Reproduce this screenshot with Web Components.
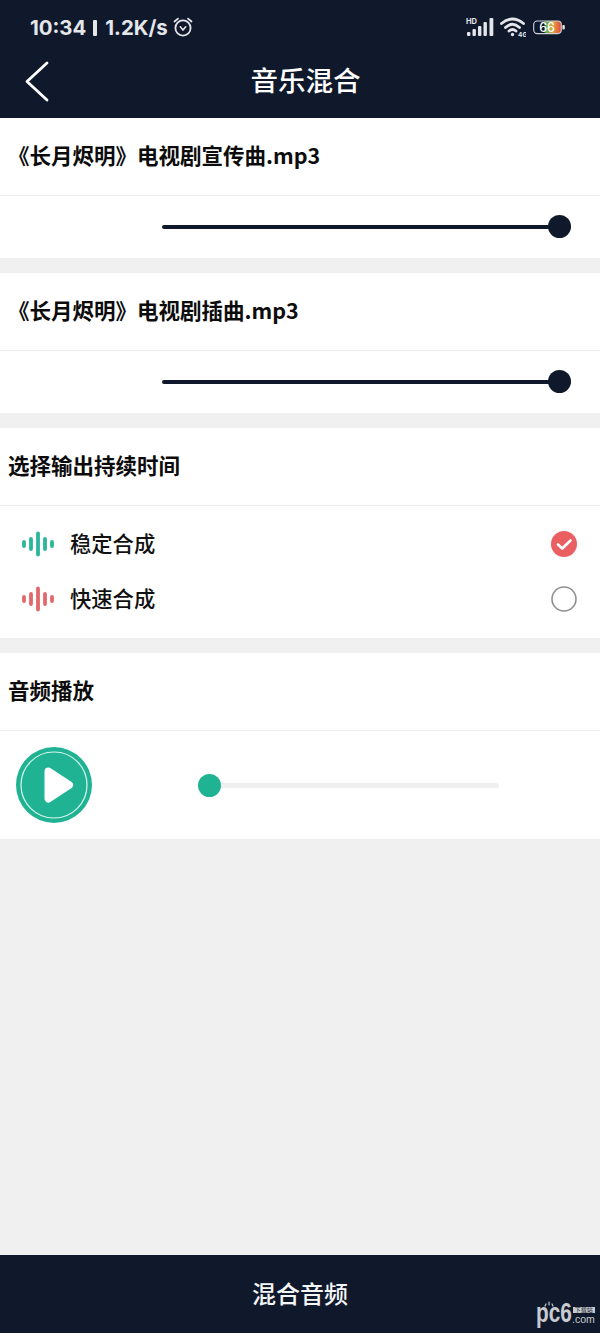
<!DOCTYPE html>
<html lang="zh">
<head>
<meta charset="utf-8">
<title>音乐混合</title>
<style>
  html, body { margin: 0; padding: 0; }
  body {
    width: 600px; height: 1333px; background: #f0f0f0; overflow: hidden;
    display: flex; flex-direction: column; position: relative;
    font-family: "Noto Sans CJK SC", "Noto Sans", sans-serif; color: #0c0c0c;
  }
  .grow { flex: 1; }
</style>
</head>
<body>
<top-bar>音乐混合</top-bar>
<mix-section label="《长月烬明》电视剧宣传曲.mp3"><volume-slider></volume-slider></mix-section>
<mix-section label="《长月烬明》电视剧插曲.mp3"><volume-slider></volume-slider></mix-section>
<mix-section label="选择输出持续时间">
  <mode-list>
    <mode-row color="#2bb59b" checked>稳定合成</mode-row>
    <mode-row color="#e2696b">快速合成</mode-row>
  </mode-list>
</mix-section>
<mix-section label="音频播放" last><audio-player></audio-player></mix-section>
<div class="grow"></div>
<mix-button>混合音频</mix-button>
<site-mark></site-mark>

<script>
class TopBar extends HTMLElement {
  constructor() {
    super();
    this.attachShadow({ mode: 'open' }).innerHTML = `
      <style>
        :host { display: block; height: 118px; background: #10192c; color: #fff; }
        .status { height: 52px; display: flex; align-items: center; justify-content: space-between; padding: 2px 35px 0 30px; box-sizing: border-box; color: #e4e6ea; }
        .left { display: flex; align-items: center; font: 700 20.4px Inter, sans-serif; }
        .pipe { width: 4px; height: 16px; background: currentColor; margin: 1px 8px 0 7px; border-radius: 1px; }
        .alarm { margin-left: 4px; }
        .right { display: flex; align-items: center; }
        .wifi { margin: 0 7px 0 6px; }
        .bar { height: 66px; display: flex; align-items: center; justify-content: center; position: relative; font-size: 27.5px; font-weight: 500; line-height: 1; padding: 0 0 10px 11px; box-sizing: border-box; }
        .back { position: absolute; left: 24px; top: 9px; }
      </style>
      <div class="status">
        <div class="left">
          <span>10:34</span><i class="pipe"></i><span>1.2K/s</span>
          <svg class="alarm" width="22" height="22" viewBox="0 0 22 22" fill="none" stroke="currentColor" stroke-width="1.8" stroke-linecap="round">
            <circle cx="11" cy="12" r="7.6"/>
            <path d="M2.5 5.5 L6 2.6 M19.5 5.5 L16 2.6"/>
            <path d="M8.3 10.8 L11 14 L13.7 10.8" stroke-width="1.6"/>
          </svg>
        </div>
        <div class="right">
          <svg width="28" height="20" viewBox="0 0 28 20" fill="currentColor">
            <text x="0" y="6.5" font-family="Inter, sans-serif" font-size="7.5" font-weight="700">HD</text>
            <rect x="1" y="15" width="3.4" height="4" rx="1"/>
            <rect x="6.5" y="12" width="3.4" height="7" rx="1"/>
            <rect x="12" y="9" width="3.4" height="10" rx="1"/>
            <rect x="17.5" y="5" width="3.4" height="14" rx="1"/>
            <rect x="23.5" y="1" width="3.8" height="18" rx="1"/>
          </svg>
          <svg class="wifi" width="26" height="20" viewBox="0 0 26 20" fill="none" stroke="currentColor" stroke-width="2.8" stroke-linecap="round">
            <path d="M1.5 6.5 Q12.5 -2.5 23.5 6.5"/>
            <path d="M5.5 10.5 Q12.5 4 19.5 10.5"/>
            <path d="M9 14 Q12.5 11 16 14"/>
            <circle cx="12.5" cy="17.5" r="1.7" fill="currentColor" stroke="none"/>
            <text x="18" y="19.5" font-family="Inter, sans-serif" font-size="6.5" font-weight="700" fill="currentColor" stroke="none">4G</text>
          </svg>
          <svg width="32" height="15" viewBox="0 0 32 15">
            <defs>
              <linearGradient id="batt" x1="0" x2="1" y1="0" y2="0">
                <stop offset="0.36" stop-color="#10192c"/>
                <stop offset="0.44" stop-color="#4fae5a"/>
                <stop offset="0.68" stop-color="#e3a93c"/>
                <stop offset="1" stop-color="#e2473f"/>
              </linearGradient>
            </defs>
            <rect x="0.7" y="1" width="27.6" height="12.6" rx="3.5" fill="url(#batt)" stroke="#cfd2d8" stroke-width="1.1"/>
            <rect x="29.4" y="5" width="2.4" height="4.6" rx="1" fill="#e6e8ec"/>
            <text x="14" y="12" text-anchor="middle" font-family="Inter, sans-serif" font-size="12.5" font-weight="500" fill="#fff">66</text>
          </svg>
        </div>
      </div>
      <div class="bar">
        <svg class="back" width="26" height="42" viewBox="0 0 26 42" fill="none" stroke="#fff" stroke-width="2.8" stroke-linecap="round" stroke-linejoin="round">
          <path d="M23 2 L3 20.5 L23 39"/>
        </svg>
        <slot></slot>
      </div>`;
  }
}

class MixSection extends HTMLElement {
  constructor() {
    super();
    this.attachShadow({ mode: 'open' }).innerHTML = `
      <style>
        :host { display: block; background: #fff; margin-bottom: 15px; }
        :host([last]) { margin-bottom: 0; }
        .head { height: 78px; box-sizing: border-box; border-bottom: 1px solid #ececec; padding: 0 0 5px 8px; display: flex; align-items: center; font-size: 21.5px; font-weight: 700; color: #0c0c0c; white-space: nowrap; }
      </style>
      <div class="head"></div>
      <slot></slot>`;
  }
  connectedCallback() {
    this.shadowRoot.querySelector('.head').textContent = this.getAttribute('label');
  }
}

class VolumeSlider extends HTMLElement {
  constructor() {
    super();
    this.attachShadow({ mode: 'open' }).innerHTML = `
      <style>
        :host { display: flex; align-items: center; height: 62px; box-sizing: border-box; padding: 0 29px 1px 162px; }
        .track { flex: 1; height: 4px; border-radius: 2px; background: #10192c; position: relative; }
        .thumb { position: absolute; right: 0; top: -9.5px; width: 23px; height: 23px; border-radius: 50%; background: #10192c; }
      </style>
      <div class="track"><div class="thumb"></div></div>`;
  }
}

class ModeList extends HTMLElement {
  constructor() {
    super();
    this.attachShadow({ mode: 'open' }).innerHTML = `
      <style>:host { display: flex; flex-direction: column; height: 132px; padding-top: 10px; box-sizing: border-box; }</style>
      <slot></slot>`;
  }
}

class ModeRow extends HTMLElement {
  constructor() {
    super();
    this.attachShadow({ mode: 'open' }).innerHTML = `
      <style>
        :host { display: flex; align-items: center; height: 55px; padding: 0 23px 0 22px; font-size: 21.3px; font-weight: 500; color: #111; }
        .wave { margin-right: 16px; }
        .label { flex: 1; padding-bottom: 3px; }
      </style>
      <svg class="wave" width="32" height="26" viewBox="0 0 32 26" fill="none" stroke-linecap="round">
        <path class="w" stroke-width="3.8" d="M2 11 V15 M9 8 V18 M16 2.5 V23.5 M23 8 V18 M30 11 V15"/>
      </svg>
      <span class="label"><slot></slot></span>
      <span class="mark"></span>`;
  }
  connectedCallback() {
    this.shadowRoot.querySelector('.w').setAttribute('stroke', this.getAttribute('color'));
    const mark = this.shadowRoot.querySelector('.mark');
    mark.innerHTML = this.hasAttribute('checked')
      ? `<svg width="26" height="26" viewBox="0 0 26 26" style="display:block"><circle cx="13" cy="13" r="13" fill="#ea5f61"/><path d="M7 13.5 L11.2 17.5 L19.5 9.5" fill="none" stroke="#fff" stroke-width="2.6" stroke-linecap="round" stroke-linejoin="round"/></svg>`
      : `<svg width="26" height="26" viewBox="0 0 26 26" style="display:block"><circle cx="13" cy="13" r="12" fill="#fff" stroke="#8f8f8f" stroke-width="1.6"/></svg>`;
  }
}

class AudioPlayer extends HTMLElement {
  constructor() {
    super();
    this.attachShadow({ mode: 'open' }).innerHTML = `
      <style>
        :host { display: flex; align-items: center; height: 108px; padding: 0 101px 0 16px; box-sizing: border-box; }
        .play { display: block; margin-right: 106px; }
        .track { flex: 1; height: 5px; border-radius: 3px; background: #efefef; position: relative; }
        .thumb { position: absolute; left: 0; top: -9px; width: 23px; height: 23px; border-radius: 50%; background: #1fb394; }
      </style>
      <svg class="play" width="76" height="76" viewBox="0 0 76 76">
        <circle cx="38" cy="38" r="38" fill="#1fb394"/>
        <circle cx="38" cy="38" r="33" fill="none" stroke="#d8f4ec" stroke-width="1.2"/>
        <path d="M32.5 24.5 L53 38 L32.5 51.5 Z" fill="#fff" stroke="#fff" stroke-width="8" stroke-linejoin="round"/>
      </svg>
      <div class="track"><div class="thumb"></div></div>`;
  }
}

class MixButton extends HTMLElement {
  constructor() {
    super();
    this.attachShadow({ mode: 'open' }).innerHTML = `
      <style>
        :host { display: flex; align-items: center; justify-content: center; height: 78px; padding-bottom: 3px; box-sizing: border-box; background: #10192c; color: #f4f5f7; font-size: 24px; font-weight: 500; }
      </style>
      <slot></slot>`;
  }
}

class SiteMark extends HTMLElement {
  constructor() {
    super();
    this.attachShadow({ mode: 'open' }).innerHTML = `
      <style>
        :host { position: absolute; left: 536px; top: 1301px; display: flex; align-items: flex-start; color: #c8cbd0; font-family: "Liberation Sans", sans-serif; }
        .logo { width: 36px; height: 24px; position: relative; }
        .pc { display: block; font-size: 28px; font-weight: 700; line-height: 24px; transform: scaleX(.74); transform-origin: left top; white-space: nowrap; }
        .lash { position: absolute; left: 8px; top: 0; }
        .side { display: flex; flex-direction: column; align-items: flex-end; margin-top: 6px; }
        .tag { background: #c4c7cc; color: #10192c; font-size: 6px; line-height: 6px; height: 6px; padding: 0 2px; font-family: "Noto Sans CJK SC", sans-serif; }
        .com { font-size: 10.5px; line-height: 12px; }
      </style>
      <div class="logo">
        <span class="pc">pc6</span>
        <svg class="lash" width="10" height="6" viewBox="0 0 10 6" fill="none" stroke="#c8cbd0" stroke-width="1.2" stroke-linecap="round">
          <path d="M1 5 L2 3 M5 4 V1 M9 5 L8 3"/>
        </svg>
      </div>
      <div class="side"><span class="tag">下载站</span><span class="com">.com</span></div>`;
  }
}

customElements.define('top-bar', TopBar);
customElements.define('mix-section', MixSection);
customElements.define('volume-slider', VolumeSlider);
customElements.define('mode-list', ModeList);
customElements.define('mode-row', ModeRow);
customElements.define('audio-player', AudioPlayer);
customElements.define('mix-button', MixButton);
customElements.define('site-mark', SiteMark);
</script>
</body>
</html>
